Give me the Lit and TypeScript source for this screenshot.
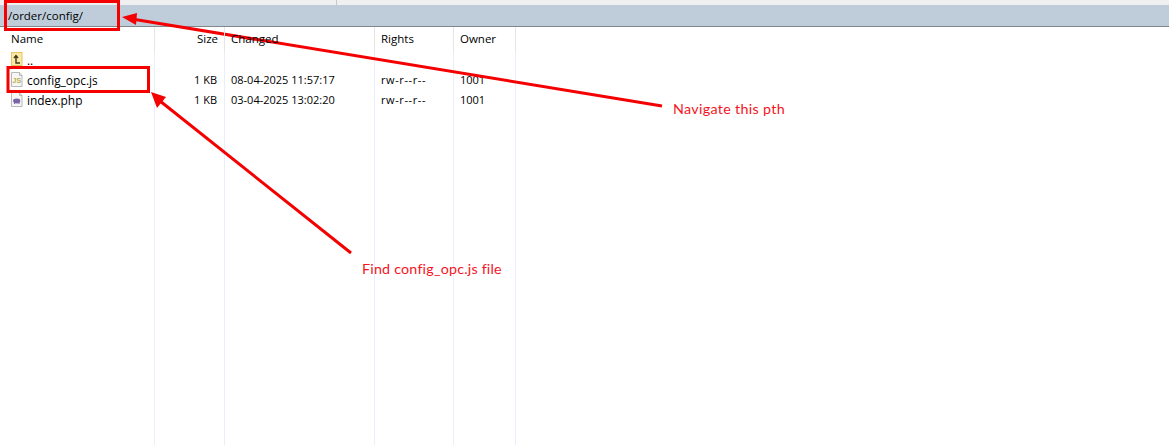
import { LitElement, html, css, svg } from "lit";
import { customElement } from "lit/decorators.js";

const rows = [
  { name: "..", size: "", changed: "", rights: "", owner: "", icon: "up" },
  { name: "config_opc.js", size: "1 KB", changed: "08-04-2025 11:57:17", rights: "rw-r--r--", owner: "1001", icon: "js" },
  { name: "index.php", size: "1 KB", changed: "03-04-2025 13:02:20", rights: "rw-r--r--", owner: "1001", icon: "php" },
];

const icon = (k: string) => {
  if (k === "up")
    return html`<svg width="14" height="16" viewBox="0 0 14 16"><rect x="1.5" y="0.5" width="10.5" height="13" fill="#fbe9a6" stroke="#e3c75f"/><path d="M6 4v7h4M4 6l2-2.5L8 6" fill="none" stroke="#3a3a20" stroke-width="1.4"/></svg>`;
  const doc = svg`<path d="M1.5.5h8l2.5 3v11H1.5z" fill="#f6f6f6" stroke="#b8b8b8"/><path d="M9.5.5v3h2.5" fill="#e4e4e4" stroke="#b8b8b8"/>`;
  if (k === "js")
    return html`<svg width="14" height="16" viewBox="0 0 14 16">${doc}<text class="js" x="2.6" y="11">JS</text></svg>`;
  return html`<svg width="14" height="16" viewBox="0 0 14 16">${doc}<ellipse cx="6.7" cy="9" rx="3.6" ry="2.4" fill="#7a64a8"/><path d="M4.5 10.5v1.5M9 10.5v1.5" stroke="#7a64a8"/></svg>`;
};

@customElement("app-root")
export class AppRoot extends LitElement {
  static styles = css`
    :host { display: block; position: relative; width: 1169px; height: 445px; overflow: hidden; background: #fff;
      font-family: "Open Sans", "Noto Sans", sans-serif; font-size: 11px; color: #000; }
    .top { height: 5px; background: #f0f0f0; display: flex; }
    .top i { width: 1px; background: #c8c8c8; margin-left: 336px; }
    .path { height: 22px; box-sizing: border-box; background: #bfcddb; border-bottom: 1px solid #82878c; padding: 0 0 0 8px; display: flex; align-items: center; font-size: 11.5px; line-height: 20px; }
    .table { height: 418px; display: grid; grid-template-columns: 155px 70px 150px 79px 62px 1fr; grid-template-rows: 23px repeat(3, 20px) 1fr; }
    .cell { box-sizing: border-box; padding-left: 6px; white-space: nowrap; line-height: 20px; display: flex; align-items: center; }
    .head { align-items: flex-start; height: 25px; padding-top: 2px; border-right: 1px solid #e5e5e5; font-size: 11.5px; position: relative; z-index: 1; }
    .body { border-right: 1px solid #e8eefa; }
    .right { justify-content: flex-end; padding-right: 6px; padding-left: 0; }
    .sz { padding-right: 7px; }
    .name { gap: 3px; padding-left: 10px; font-size: 11.9px; }
    .first { padding-left: 11px; }
    .perm { letter-spacing: 0.6px; }
    .name svg { flex: none; }
    .js { font: bold 7px "Liberation Sans", sans-serif; fill: #b9ae4a; }
    .overlay { position: absolute; left: 0; top: 0; pointer-events: none; }
    .note { position: absolute; color: #f5141e; font-family: Lato, "Open Sans", sans-serif; font-size: 14.3px; white-space: nowrap; line-height: 18px; letter-spacing: 0.2px; }
    .nav { left: 673px; top: 100px; letter-spacing: 0.32px; }
    .find { left: 362px; top: 260px; }
  `;

  render() {
    return html`
      <div class="top"><i></i></div>
      <div class="path">/order/config/</div>
      <div class="table">
        <div class="cell head first">Name</div>
        <div class="cell head right">Size</div>
        <div class="cell head">Changed</div>
        <div class="cell head">Rights</div>
        <div class="cell head">Owner</div>
        <div></div>
        ${rows.map(
          (r) => html`
            <div class="cell body name">${icon(r.icon)}<span>${r.name}</span></div>
            <div class="cell body right sz">${r.size}</div>
            <div class="cell body">${r.changed}</div>
            <div class="cell body perm">${r.rights}</div>
            <div class="cell body">${r.owner}</div>
            <div></div>
          `
        )}
        ${[0, 1, 2, 3, 4].map(() => html`<div class="cell body"></div>`)}<div></div>
      </div>
      <svg class="overlay" width="1169" height="445" viewBox="0 0 1169 445">
        <rect x="5.5" y="1.5" width="113" height="28" fill="none" stroke="#f40000" stroke-width="3"/>
        <rect x="8" y="67.5" width="140.5" height="24" fill="none" stroke="#f40000" stroke-width="3"/>
        <path d="M662 106L135 19.5" stroke="#f40000" stroke-width="3" fill="none"/>
        <path d="M122 17L137 13L136 25z" fill="#f40000"/>
        <path d="M351 253L160 101" stroke="#f40000" stroke-width="3" fill="none"/>
        <path d="M151 92L166 97L157 108z" fill="#f40000"/>
      </svg>
      <div class="note nav">Navigate this pth</div>
      <div class="note find">Find config_opc.js file</div>
    `;
  }
}
